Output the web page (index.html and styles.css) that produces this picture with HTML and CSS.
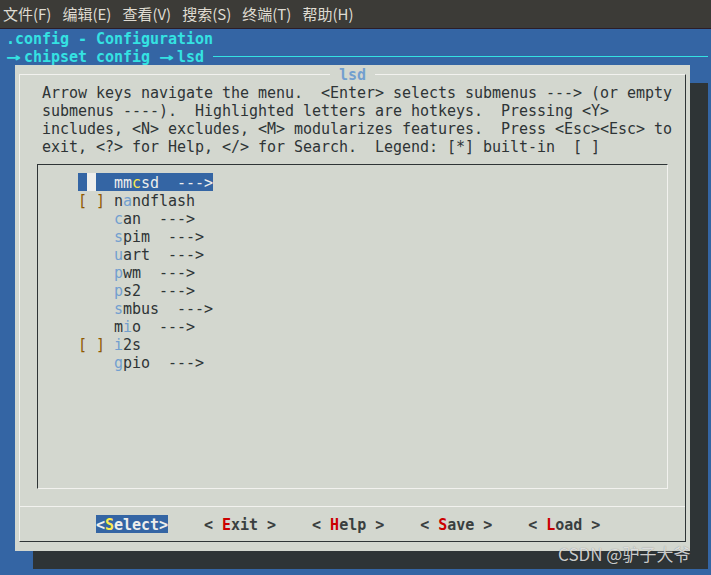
FILE: index.html
```html
<!DOCTYPE html>
<html>
<head>
    <title>lsd - Configuration</title>
    <link rel="stylesheet" href="styles.css">
</head>
<body>
    <div class="menubar">
        <span class="menu">文件(F)</span>
        <span class="menu">编辑(E)</span>
        <span class="menu">查看(V)</span>
        <span class="menu">搜索(S)</span>
        <span class="menu">终端(T)</span>
        <span class="menu">帮助(H)</span>
    </div>

    <div class="terminal">
        <div class="backtitle">.config - Configuration</div>
        <div class="subtitle"><span class="arrow"><span>→</span></span>chipset config <span class="arrow"><span>→</span></span>lsd<span class="rule"></span></div>

        <div class="dialog">
            <div class="frame">
                <span class="title"> lsd </span>

                <div class="help">
                    <div class="line">Arrow keys navigate the menu.  &lt;Enter&gt; selects submenus ---&gt; (or empty</div>
                    <div class="line">submenus ----).  Highlighted letters are hotkeys.  Pressing &lt;Y&gt;</div>
                    <div class="line">includes, &lt;N&gt; excludes, &lt;M&gt; modularizes features.  Press &lt;Esc&gt;&lt;Esc&gt; to</div>
                    <div class="line">exit, &lt;?&gt; for Help, &lt;/&gt; for Search.  Legend: [*] built-in  [ ]</div>
                </div>

                <div class="menu-box">
                    <div class="item"><span class="row selected"> <span class="cursor"> </span>  mm<span class="key">c</span>sd  ---&gt;</span></div>
                    <div class="item"><span class="row"><span class="check">[</span> <span class="check">]</span> n<span class="key">a</span>ndflash</span></div>
                    <div class="item"><span class="row">    <span class="key">c</span>an  ---&gt;</span></div>
                    <div class="item"><span class="row">    <span class="key">s</span>pim  ---&gt;</span></div>
                    <div class="item"><span class="row">    <span class="key">u</span>art  ---&gt;</span></div>
                    <div class="item"><span class="row">    <span class="key">p</span>wm  ---&gt;</span></div>
                    <div class="item"><span class="row">    <span class="key">p</span>s2  ---&gt;</span></div>
                    <div class="item"><span class="row">    <span class="key">s</span>mbus  ---&gt;</span></div>
                    <div class="item"><span class="row">    m<span class="key">i</span>o  ---&gt;</span></div>
                    <div class="item"><span class="row"><span class="check">[</span> <span class="check">]</span> <span class="key">i</span>2s</span></div>
                    <div class="item"><span class="row">    <span class="key">g</span>pio  ---&gt;</span></div>
                </div>

                <div class="buttons">
                    <span class="button active">&lt;<span class="hot">S</span>elect&gt;</span>
                    <span class="button">&lt; <span class="hot">E</span>xit &gt;</span>
                    <span class="button">&lt; <span class="hot">H</span>elp &gt;</span>
                    <span class="button">&lt; <span class="hot">S</span>ave &gt;</span>
                    <span class="button">&lt; <span class="hot">L</span>oad &gt;</span>
                </div>
            </div>
        </div>
    </div>

    <div class="watermark">CSDN @驴子大爷</div>
</body>
</html>
```

FILE: styles.css
```css
body {
    margin: 0;
    height: 575px;
    overflow: hidden;
    background-color: #3465a4;
    position: relative;
}

.menubar {
    display: flex;
    gap: 11px;
    height: 28px;
    padding-left: 3px;
    background-color: #3c3b37;
    border-bottom: 1px solid #2b1d28;
    font-family: "Noto Sans CJK SC", "Noto Sans", sans-serif;
    font-size: 15px;
    line-height: 28px;
    color: #dfdbd2;
}

/* cells are 9x18, text sits 1px low in each row like the terminal does */
.terminal {
    padding: 0 3px 0 6px;
    font-family: "DejaVu Sans Mono", monospace;
    font-size: 15px;
    letter-spacing: -0.03px;
    line-height: 20px;
    color: #2e3436;
}

.backtitle {
    height: 18px;
    color: #34e2e2;
    font-weight: bold;
    white-space: pre;
}

.subtitle {
    display: flex;
    align-items: flex-start;
    height: 18px;
    color: #34e2e2;
    font-weight: bold;
    white-space: pre;
}

.arrow {
    display: inline-block;
    width: 18px;
}

.arrow span {
    display: inline-block;
    transform: scaleX(1.6);
    transform-origin: left center;
}

.rule {
    flex: 1;
    align-self: center;
    margin-left: 9px;
    border-top: 1px solid #34e2e2;
}

.dialog {
    margin-left: 9px;
    width: 675px;
    height: 486px;
    box-sizing: border-box;
    padding: 9px 4px;
    background-color: #d3d7cf;
    box-shadow: 18px 18px 0 #2e3436;
}

.frame {
    position: relative;
    height: 100%;
    box-sizing: border-box;
    border-top: 1px solid #f2f2ef;
    border-left: 1px solid #f2f2ef;
    border-right: 1px solid #2e3436;
    border-bottom: 1px solid #2e3436;
}

.title {
    position: absolute;
    top: -10px;
    left: 310px;
    height: 18px;
    background-color: #d3d7cf;
    color: #729fcf;
    font-weight: bold;
    white-space: pre;
}

.help {
    margin: 8px 0 0 22px;
}

.line {
    height: 18px;
    white-space: pre;
}

.menu-box {
    margin: 9px 17px 0 17px;
    height: 325px;
    box-sizing: border-box;
    padding: 8px 0 0 40px;
    border-top: 1px solid #2e3436;
    border-left: 1px solid #2e3436;
    border-right: 1px solid #f2f2ef;
    border-bottom: 1px solid #f2f2ef;
}

.item {
    height: 18px;
    white-space: pre;
}

.row {
    display: inline-block;
    height: 18px;
    vertical-align: top;
}

.row.selected {
    background-color: #3465a4;
    color: #eeeeec;
}

.cursor {
    display: inline-block;
    width: 9px;
    height: 18px;
    vertical-align: top;
    background-color: #eeeeec;
}

.key {
    color: #729fcf;
}

.selected .key {
    color: #fce94f;
}

.check {
    color: #8f5902;
}

.buttons {
    display: flex;
    gap: 36px;
    margin-top: 17px;
    padding: 8px 0 8px 76px;
    border-top: 1px solid #f2f2ef;
}

.button {
    display: inline-block;
    height: 18px;
    font-weight: bold;
    color: #3a3f40;
    white-space: pre;
}

.button .hot {
    color: #cc0000;
}

.button.active {
    background-color: #3465a4;
    color: #eeeeec;
}

.button.active .hot {
    color: #fce94f;
}

.watermark {
    position: absolute;
    left: 558px;
    top: 543px;
    font-family: "Noto Sans CJK SC", "Noto Sans", sans-serif;
    font-size: 17px;
    line-height: 22px;
    color: rgba(235, 235, 235, 0.85);
    text-shadow: 0 0 1px rgba(0, 0, 0, 0.4);
}
```
